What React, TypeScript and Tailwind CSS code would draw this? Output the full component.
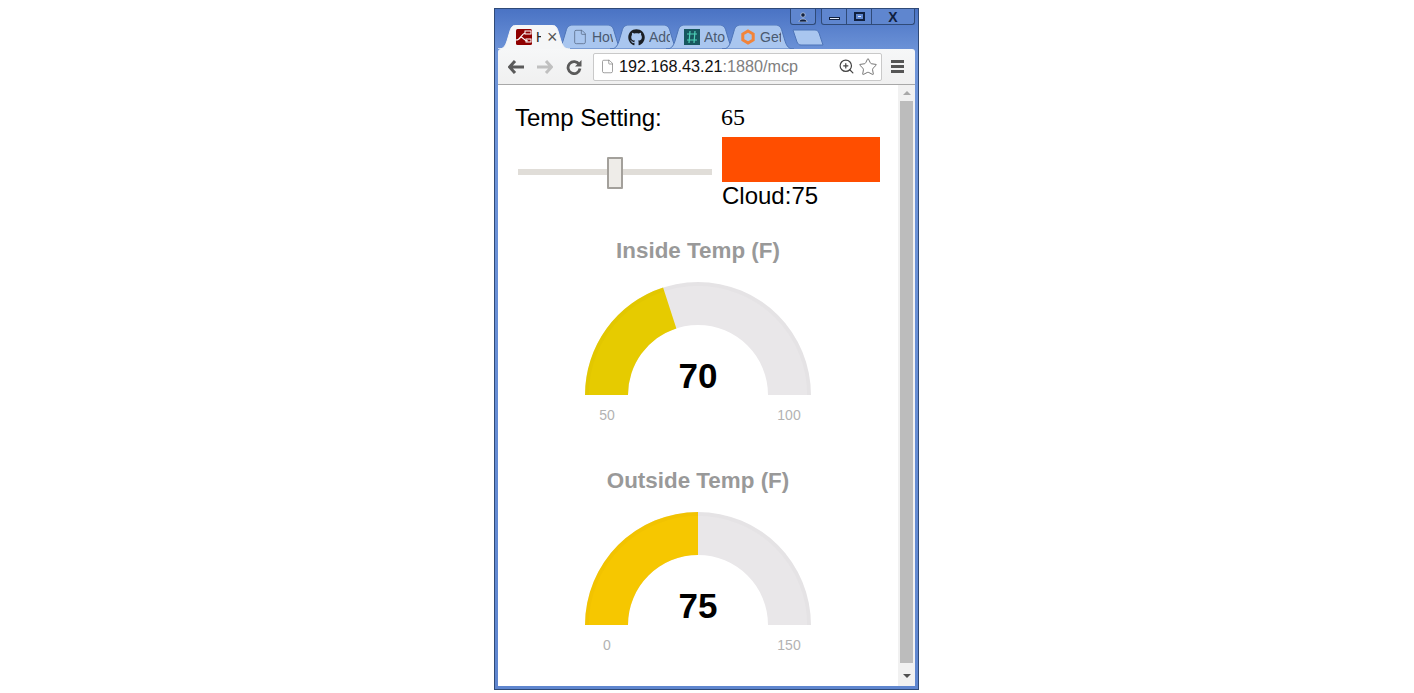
import { File, ZoomIn, Star } from "lucide-react";
import { FaGithub } from "react-icons/fa";

const arial = "font-['Liberation_Sans',Arial,sans-serif]";

// one tab silhouette, slanted sides like old Chrome
function Tab({ active, children }: { active?: boolean; children: React.ReactNode }) {
  const w = 72;
  const d = `M0 24 C5 24 7 22 9 16 L12 6 C13 2 15 0 19 0 L${w - 19} 0 C${w - 15} 0 ${w - 13} 2 ${w - 12} 6 L${w - 9} 16 C${w - 7} 22 ${w - 5} 24 ${w} 24 Z`;
  return (
    <div className={`relative h-6 w-[72px] shrink-0 -mr-[16px] ${active ? "z-10" : ""}`}>
      <svg width={w} height={24} className="absolute inset-0">
        <path d={d} fill={active ? "#f5f6f7" : "#a9c6ef"} stroke={active ? "#f5f6f7" : "#4d74b8"} strokeWidth="1" />
      </svg>
      <div className="relative flex h-full items-center pl-[18px]">{children}</div>
    </div>
  );
}

function TabText({ children }: { children: React.ReactNode }) {
  return (
    <span className={`ml-[4px] w-[21px] overflow-hidden whitespace-nowrap text-[14px] text-[#4a5a70] ${arial}`}>
      {children}
    </span>
  );
}

function Gauge({ title, value, min, max, pct, color }: { title: string; value: string; min: string; max: string; pct: number; color: string }) {
  const cx = 113, cy = 113, R = 113, r = 70;
  const a = Math.PI * (1 - pct);
  const x1 = cx + R * Math.cos(a), y1 = cy - R * Math.sin(a);
  const x2 = cx + r * Math.cos(a), y2 = cy - r * Math.sin(a);
  return (
    <div className="flex flex-col items-center">
      <div className={`text-[22.4px] leading-[26px] font-bold text-[#999999] ${arial}`}>{title}</div>
      <svg width={226} height={150} className="mt-[18px]">
        <path d={`M0 113 A${R} ${R} 0 0 1 226 113 L183 113 A${r} ${r} 0 0 0 43 113 Z`} fill="#e9e7e9" />
        <path d={`M0 113 A${R} ${R} 0 0 1 ${x1} ${y1} L${x2} ${y2} A${r} ${r} 0 0 0 43 113 Z`} fill={color} />
        {/* faint inner shadow along the outer rim */}
        <path d="M2 113 A111 111 0 0 1 224 113" fill="none" stroke="#000" strokeOpacity="0.015" strokeWidth="4" />
        <text x={113} y={106} textAnchor="middle" fontFamily="Liberation Sans, Arial, sans-serif" fontWeight="700" fontSize="35" fill="#000">{value}</text>
        <text x={22} y={138} textAnchor="middle" fontFamily="Liberation Sans, Arial, sans-serif" fontSize="14" fill="#b3b3b3">{min}</text>
        <text x={204} y={138} textAnchor="middle" fontFamily="Liberation Sans, Arial, sans-serif" fontSize="14" fill="#b3b3b3">{max}</text>
      </svg>
    </div>
  );
}

export default function App() {
  return (
    <div className="flex min-h-[693px] justify-center bg-white pt-2 pr-px">
      <div className="flex h-[682px] w-[425px] flex-col border border-[#2f4a78] bg-[linear-gradient(#4a73c4,#6f95d9_45px,#5f86cf)] px-[3px] pb-[3px]">
        {/* window controls */}
        <div className="flex h-[16px] justify-end text-[#1c2c4c]">
          <div className="flex h-full w-[26px] items-center justify-center rounded-b-[3px] border border-t-0 border-[#2f4a78] bg-[#5f86cf]">
            <svg width="10" height="10" viewBox="0 0 10 10"><circle cx="5" cy="3" r="2.2" fill="#10203f" stroke="#dfe8f7" strokeWidth="0.6" /><path d="M1 10 C1 6 9 6 9 10 Z" fill="#10203f" stroke="#dfe8f7" strokeWidth="0.6" /></svg>
          </div>
          <div className="ml-[5px] flex h-full rounded-b-[3px] border border-t-0 border-[#2f4a78] bg-[#5f86cf]">
            <div className="flex w-[25px] items-center justify-center border-r border-[#2f4a78]">
              <div className="mt-1 h-[3px] w-[11px] border border-[#10203f] bg-[#dfe8f7]" />
            </div>
            <div className="flex w-[25px] items-center justify-center border-r border-[#2f4a78]">
              <div className="flex h-[9px] w-[11px] items-center justify-center border-2 border-[#10203f]"><div className="h-[1px] w-[3px] bg-[#dfe8f7]" /></div>
            </div>
            <div className={`flex w-[42px] items-center justify-center text-[14px] leading-none font-bold text-[#10203f] ${arial}`}>X</div>
          </div>
        </div>

        {/* tab strip */}
        <div className="flex h-[24px] items-end">
          <Tab active>
            <svg width="16" height="16" viewBox="0 0 16 16" className="shrink-0">
              <rect width="16" height="16" rx="1.5" fill="#8f0000" />
              <path d="M0 11 C5 11 5 5 9 4 M5 8 C8 9 8 12 12 12" fill="none" stroke="#fff" strokeWidth="1.2" />
              <rect x="9" y="2" width="6" height="3" fill="none" stroke="#fff" strokeWidth="1" />
              <rect x="10" y="10" width="5" height="3" fill="none" stroke="#fff" strokeWidth="1" />
            </svg>
            <span className={`ml-[4px] w-[5px] overflow-hidden text-[14px] text-[#222] ${arial}`}>H</span>
            <span className={`ml-[6px] text-[18px] leading-none text-[#555] ${arial}`}>×</span>
          </Tab>
          <Tab>
            <File size={16} strokeWidth={1.2} className="shrink-0 text-[#5a6d8a]" />
            <TabText>How</TabText>
          </Tab>
          <Tab>
            <FaGithub size={17} className="shrink-0 text-[#1b1f24]" />
            <TabText>Add</TabText>
          </Tab>
          <Tab>
            <svg width="16" height="16" viewBox="0 0 16 16" className="shrink-0">
              <rect width="16" height="16" fill="#17575f" />
              <path d="M3 5 H13 M3 11 H13 M6 2 L5 14 M11 2 L10 14" stroke="#4fd1b8" strokeWidth="1.2" fill="none" />
            </svg>
            <TabText>Ato</TabText>
          </Tab>
          <Tab>
            <svg width="16" height="16" viewBox="0 0 16 16" className="shrink-0">
              <path d="M8 2 L13.2 5 V11 L8 14 L2.8 11 V5 Z" fill="none" stroke="#f2843a" strokeWidth="3" />
            </svg>
            <TabText>Get</TabText>
          </Tab>
          <svg width="32" height="17" viewBox="0 0 32 17" className="ml-[14px] mb-[3px] shrink-0">
            <path d="M1 1 H23 C25 1 26 2 27 4 L31 16 H9 C7 16 6 15 5 13 Z" fill="#a9c6ef" stroke="#4d74b8" />
          </svg>
        </div>

        {/* toolbar */}
        <div className="flex h-[36px] items-center rounded-t-[3px] border-b border-[#a8a8a8] bg-[linear-gradient(#f6f7f8,#f0f0f0)]">
          <svg width="16" height="14" viewBox="0 0 16 14" className="ml-[10px]"><path d="M7 1 L1.5 7 L7 13 M2 7 H16" fill="none" stroke="#5a5a5a" strokeWidth="3" /></svg>
          <svg width="16" height="14" viewBox="0 0 16 14" className="ml-[13px]"><path d="M9 1 L14.5 7 L9 13 M14 7 H0" fill="none" stroke="#c0c0c0" strokeWidth="3" /></svg>
          <svg width="16" height="16" viewBox="0 0 16 16" className="ml-[13px]"><path d="M13.2 5.5 A6 6 0 1 0 14 9.5" fill="none" stroke="#5a5a5a" strokeWidth="2.8" /><path d="M15.5 1 V7.5 H9 Z" fill="#5a5a5a" /></svg>
          <div className="ml-[11px] flex h-[28px] w-[289px] items-center rounded-[2px] border border-[#c9c9c9] bg-white pl-[6px] pr-[3px]">
            <File size={15} strokeWidth={1.1} className="shrink-0 text-[#777]" />
            <span className={`ml-[4px] text-[16.2px] whitespace-nowrap text-[#111] ${arial}`}>
              192.168.43.21<span className="text-[#808080]">:1880/mcp</span>
            </span>
            <ZoomIn size={17} strokeWidth={1.7} className="ml-auto shrink-0 text-[#444]" />
            <Star size={20} strokeWidth={1.2} className="ml-[3px] shrink-0 text-[#777]" />
          </div>
          <div className="ml-[9px] flex flex-col gap-[2px]">
            <div className="h-[3px] w-[13px] bg-[#555]" />
            <div className="h-[3px] w-[13px] bg-[#555]" />
            <div className="h-[3px] w-[13px] bg-[#555]" />
          </div>
        </div>

        {/* page */}
        <div className="flex min-h-0 flex-1 bg-white">
          <main className="w-[400px] overflow-hidden">
            <div className="flex pt-[17px]">
              <div className="w-[224px] pl-[18px]">
                <div className={`text-[24px] leading-[32px] -ml-[1px] text-black ${arial}`}>Temp Setting:</div>
                <div className="relative mt-[35px] h-[6px] w-[194px] ml-[2px] bg-[#e0ddd8]">
                  <div className="absolute top-[-12px] left-[89px] h-[32px] w-[16px] rounded-[1px] border-2 border-[#a3a09b] bg-[#eeece8]" />
                </div>
              </div>
              <div className="w-[158px]">
                <div className="-ml-[1px] mb-[4px] font-['Liberation_Serif','Times_New_Roman',serif] text-[24px] leading-[31px] text-black">65</div>
                <div className="h-[45px] bg-[#ff4e00]" />
                <div className={`text-[24px] leading-[28px] text-black ${arial}`}>Cloud:75</div>
              </div>
            </div>
            <div className="mt-[28px] flex flex-col gap-[36px]">
              <Gauge title="Inside Temp (F)" value="70" min="50" max="100" pct={0.4} color="#e6cb00" />
              <Gauge title="Outside Temp (F)" value="75" min="0" max="150" pct={0.5} color="#f6c700" />
            </div>
          </main>
          {/* scrollbar */}
          <div className="flex w-[17px] flex-col items-center bg-[#f1f1f1]">
            <div className="mt-[6px] h-0 w-0 border-x-[4px] border-b-[4px] border-x-transparent border-b-[#a8a8a8]" />
            <div className="mt-[6px] w-[13px] flex-1 bg-[#bcbcbc]" />
            <div className="mt-[11px] mb-[8px] h-0 w-0 border-x-[4px] border-t-[4px] border-x-transparent border-t-[#505050]" />
          </div>
        </div>
      </div>
    </div>
  );
}
